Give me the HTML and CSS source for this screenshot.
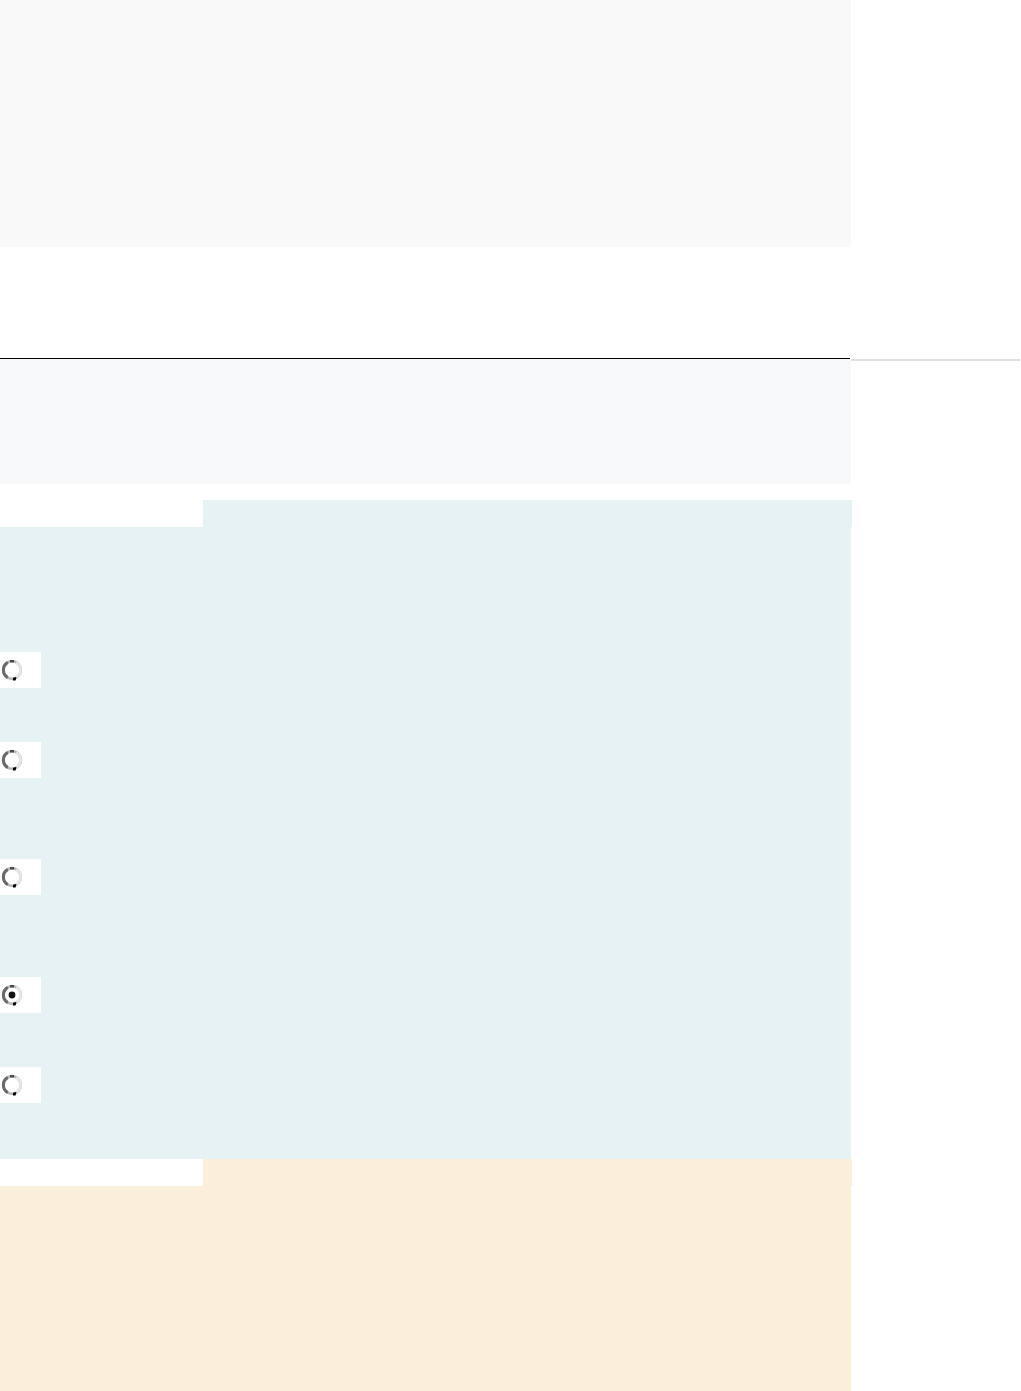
FILE: index.html
```html
<!DOCTYPE html>
<html lang="en">
<head>
<meta charset="utf-8">
<title>Form</title>
<link rel="stylesheet" href="styles.css">
</head>
<body>
<div class="page">
  <header class="hero"></header>
  <div class="spacer"></div>
  <div class="rule"><div class="rule-dark"></div></div>
  <div class="band">
    <div class="band-gray"></div>
    <div class="band-line"></div>
  </div>
  <section class="panel panel-blue">
    <div class="tab"></div>
    <div class="body body-blue">
      <div class="opt opt-first"><svg class="radio" width="41" height="36" viewBox="0 0 41 36"><circle cx="12" cy="18" r="8.8" fill="none" stroke="#b8b8b8" stroke-width="2.8"/><path d="M7.8 25.6 A8.8 8.8 0 0 1 7.8 10.4" fill="none" stroke="#6a6a6a" stroke-width="3"/><path d="M16.2 10.4 A8.8 8.8 0 0 1 16.2 25.6" fill="none" stroke="#e6e6e6" stroke-width="2.8"/><path d="M13 25.8 L16.4 25 L15.6 28.6 L13 28.4 Z" fill="#000"/><rect x="10" y="8" width="4" height="2.5" fill="#4a4a4a"/></svg></div>
      <div class="opt opt-short"><svg class="radio" width="41" height="36" viewBox="0 0 41 36"><circle cx="12" cy="18" r="8.8" fill="none" stroke="#b8b8b8" stroke-width="2.8"/><path d="M7.8 25.6 A8.8 8.8 0 0 1 7.8 10.4" fill="none" stroke="#6a6a6a" stroke-width="3"/><path d="M16.2 10.4 A8.8 8.8 0 0 1 16.2 25.6" fill="none" stroke="#e6e6e6" stroke-width="2.8"/><path d="M13 25.8 L16.4 25 L15.6 28.6 L13 28.4 Z" fill="#000"/><rect x="10" y="8" width="4" height="2.5" fill="#4a4a4a"/></svg></div>
      <div class="opt opt-tall"><svg class="radio" width="41" height="36" viewBox="0 0 41 36"><circle cx="12" cy="18" r="8.8" fill="none" stroke="#b8b8b8" stroke-width="2.8"/><path d="M7.8 25.6 A8.8 8.8 0 0 1 7.8 10.4" fill="none" stroke="#6a6a6a" stroke-width="3"/><path d="M16.2 10.4 A8.8 8.8 0 0 1 16.2 25.6" fill="none" stroke="#e6e6e6" stroke-width="2.8"/><path d="M13 25.8 L16.4 25 L15.6 28.6 L13 28.4 Z" fill="#000"/><rect x="10" y="8" width="4" height="2.5" fill="#4a4a4a"/></svg></div>
      <div class="opt opt-tall2"><svg class="radio" width="41" height="36" viewBox="0 0 41 36"><circle cx="12" cy="18" r="8.8" fill="none" stroke="#b8b8b8" stroke-width="2.8"/><path d="M7.8 25.6 A8.8 8.8 0 0 1 7.8 10.4" fill="none" stroke="#6a6a6a" stroke-width="3"/><path d="M16.2 10.4 A8.8 8.8 0 0 1 16.2 25.6" fill="none" stroke="#e6e6e6" stroke-width="2.8"/><path d="M13 25.8 L16.4 25 L15.6 28.6 L13 28.4 Z" fill="#000"/><rect x="10" y="8" width="4" height="2.5" fill="#4a4a4a"/><circle cx="12" cy="18" r="3.4" fill="#111"/></svg></div>
      <div class="opt opt-short"><svg class="radio" width="41" height="36" viewBox="0 0 41 36"><circle cx="12" cy="18" r="8.8" fill="none" stroke="#b8b8b8" stroke-width="2.8"/><path d="M7.8 25.6 A8.8 8.8 0 0 1 7.8 10.4" fill="none" stroke="#6a6a6a" stroke-width="3"/><path d="M16.2 10.4 A8.8 8.8 0 0 1 16.2 25.6" fill="none" stroke="#e6e6e6" stroke-width="2.8"/><path d="M13 25.8 L16.4 25 L15.6 28.6 L13 28.4 Z" fill="#000"/><rect x="10" y="8" width="4" height="2.5" fill="#4a4a4a"/></svg></div>
    </div>
  </section>
  <section class="panel panel-orange">
    <div class="tab tab-orange"></div>
    <div class="body body-orange"></div>
  </section>
</div>
</body>
</html>
```
FILE: styles.css
```css
html, body {
  margin: 0;
  padding: 0;
  background: #ffffff;
  font-family: "Liberation Sans", Arial, sans-serif;
}
.page {
  width: 1021px;
  display: flex;
  flex-direction: column;
}
.hero {
  width: 851px;
  height: 247px;
  background: #f9f9f9;
}
.spacer {
  height: 111px;
}
.rule {
  height: 1px;
}
.rule-dark {
  width: 850px;
  height: 1px;
  background: #000;
}
.band {
  display: flex;
  align-items: flex-start;
}
.band-gray {
  width: 851px;
  height: 125px;
  background: #f8f9fa;
  flex: none;
}
.band-line {
  width: 169px;
  height: 2px;
  background: #dee2e6;
}
.panel {
  width: 852px;
  display: flex;
  flex-direction: column;
}
.panel-blue {
  margin-top: 16px;
}
.tab {
  margin-left: 203px;
  width: 649px;
  height: 27px;
  background: #e6f2f4;
}
.tab-orange {
  background: #fbeedb;
}
.body {
  width: 851px;
}
.body-blue {
  height: 632px;
  background: #e6f2f4;
  display: flex;
  flex-direction: column;
}
.body-orange {
  height: 205px;
  background: #fbeedb;
}
.opt {
  width: 41px;
  height: 36px;
  background: #ffffff;
}
.radio {
  display: block;
}
.opt-first { margin-top: 125px; }
.opt-short { margin-top: 54px; }
.opt-tall { margin-top: 81px; }
.opt-tall2 { margin-top: 82px; }
```
